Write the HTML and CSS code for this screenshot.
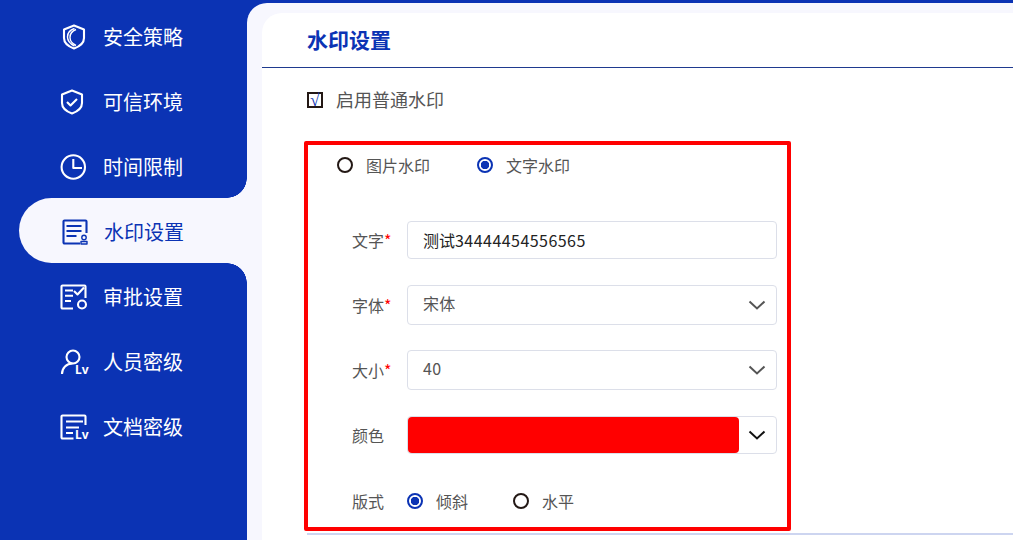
FILE: index.html
```html
<!DOCTYPE html>
<html lang="zh-CN">
<head>
  <meta charset="UTF-8" />
  <meta name="viewport" content="width=device-width, initial-scale=1.0"/>
  <link rel="stylesheet" href="styles.css">
  <title>水印设置</title>
</head>
<body>
  <div class="layout">
    <!-- 侧边菜单 -->
    <nav class="side-nav">
      <a class="nav-item">
        <svg class="nav-icon" viewBox="-1 0 26 26"><path d="M13 1.500 23 5.500v8.500c0 5-4.500 8.500-10 10.500C7.500 22.500 3 19 3 14V5.500z"/><path class="thin" d="M13.500 4.500C8.500 6 6.500 9 6.500 13c0 4 3 7 7 9"/><path class="thin" d="M15 5.500C11 7 9 10 9 13.500c0 3 2 6 6 8"/></svg>
        <span>安全策略</span>
      </a>
      <a class="nav-item">
        <svg class="nav-icon" viewBox="1 0 26 26"><path d="M13 1.500 23 5.500v8.500c0 5-4.500 8.500-10 10.500C7.500 22.500 3 19 3 14V5.500z"/><path d="m8 13 3.500 3.500 6.500-6.500"/></svg>
        <span>可信环境</span>
      </a>
      <a class="nav-item">
        <svg class="nav-icon" viewBox="0 0 26 26"><circle cx="13.300" cy="13" r="11.700"/><path d="M13.300 5V14H22"/></svg>
        <span>时间限制</span>
      </a>
      <a class="nav-item active">
        <svg class="nav-icon" viewBox="0 0 26 26"><path d="M18 24.500H2.500a1 1 0 0 1-1-1V2.500a1 1 0 0 1 1-1h21a1 1 0 0 1 1 1V14"/><path d="M4.500 7h15M4.500 12h15M4.500 17h10"/><circle class="thin" cx="22" cy="18.500" r="2.200"/><path class="thin" d="M19 25h6v-2.500h-6z"/></svg>
        <span>水印设置</span>
      </a>
      <a class="nav-item">
        <svg class="nav-icon" viewBox="0 0 26 26"><path d="M13 24.500H2.500a1 1 0 0 1-1-1V2.500a1 1 0 0 1 1-1h22a1 1 0 0 1 1 1V14"/><path d="M5 6.500h8M5 11.700h8M5 17h6"/><path d="m14 7 3.500 3.500 6.500-7"/><circle cx="22" cy="20.500" r="4"/></svg>
        <span>审批设置</span>
      </a>
      <a class="nav-item">
        <svg class="nav-icon" viewBox="0 0 26 26"><circle cx="13" cy="8" r="6.500"/><path d="M2 25c0-6 4.500-10.500 10.500-10.500"/><text class="lv" x="15" y="25">Lv</text></svg>
        <span>人员密级</span>
      </a>
      <a class="nav-item">
        <svg class="nav-icon" viewBox="0 0 26 26"><path d="M13.500 24.500H2.500a1 1 0 0 1-1-1V2.500a1 1 0 0 1 1-1h22a1 1 0 0 1 1 1V11"/><path d="M6 7.500h17M6 13.500h13M6 19h7"/><text class="lv" x="15" y="25">Lv</text></svg>
        <span>文档密级</span>
      </a>
    </nav>

    <main class="main">
      <div class="card">
        <div class="card-title">水印设置</div>
        <div class="card-body">
          <label class="check-row">
            <span class="check-box">√</span>
            <span>启用普通水印</span>
          </label>

          <div class="mark-box">
            <div class="radio-row">
              <span class="radio"></span><span class="radio-text">图片水印</span>
              <span class="radio on"></span><span class="radio-text">文字水印</span>
            </div>

            <div class="form-row row-text">
              <span class="form-label">文字<i>*</i></span>
              <div class="control"><span>测试<span class="digits">34444454556565</span></span></div>
            </div>
            <div class="form-row row-font">
              <span class="form-label">字体<i>*</i></span>
              <div class="control">
                <span class="value">宋体</span>
                <svg class="arrow" viewBox="0 0 18 10"><path d="M1.500 1.500 9 8.500l7.500-7"/></svg>
              </div>
            </div>
            <div class="form-row row-size">
              <span class="form-label">大小<i>*</i></span>
              <div class="control">
                <span class="value">40</span>
                <svg class="arrow" viewBox="0 0 18 10"><path d="M1.500 1.500 9 8.500l7.500-7"/></svg>
              </div>
            </div>
            <div class="form-row row-color">
              <span class="form-label">颜色</span>
              <div class="control color-control">
                <div class="color-fill"></div>
                <svg class="arrow dark" viewBox="0 0 18 10"><path d="M1.500 1.500 9 8.500l7.500-7"/></svg>
              </div>
            </div>
            <div class="form-row row-style">
              <span class="form-label">版式</span>
              <span class="radio on"></span><span class="radio-text">倾斜</span>
              <span class="radio"></span><span class="radio-text">水平</span>
            </div>
          </div>
          <div class="bottom-line"></div>
        </div>
      </div>
    </main>
  </div>
</body>
</html>
```

FILE: styles.css
```css
* {
  box-sizing: border-box;
}

:root {
  --blue: #0b33b4;
  --light: #f7f7fe;
  --text-color: #333333;
  --muted-color: #555555;
  --border-color: #dcdfe9;
}

html, body {
  margin: 0;
  padding: 0;
  height: 100%;
  overflow: hidden;
  background: var(--blue);
  font-family: "Noto Sans CJK SC", "Noto Sans", sans-serif;
  color: var(--text-color);
}

.layout {
  display: flex;
  height: 540px;
}

/* 侧边菜单 */
.side-nav {
  width: 247px;
  flex-shrink: 0;
  display: flex;
  flex-direction: column;
  padding-top: 3px;
}

.nav-item {
  position: relative;
  height: 65px;
  display: flex;
  align-items: center;
  gap: 17px;
  padding: 2px 0 0 60px;
  color: #ffffff;
  font-size: 20px;
}

.nav-icon {
  width: 26px;
  height: 26px;
  overflow: visible;
  fill: none;
  stroke: currentColor;
  stroke-width: 2.100;
  stroke-linejoin: round;
  flex-shrink: 0;
}

.nav-icon .thin {
  stroke-width: 1.400;
}

.nav-icon .lv {
  fill: currentColor;
  stroke: none;
  font-size: 12px;
  font-weight: 700;
  font-family: "Noto Sans", sans-serif;
}

.nav-item.active {
  margin-left: 19px;
  padding-left: 43px;
  gap: 16px;
  color: var(--blue);
  background: var(--light);
  border-radius: 33px 0 0 33px;
}

.nav-item.active::before,
.nav-item.active::after {
  content: '';
  position: absolute;
  right: 0;
  width: 20px;
  height: 20px;
}

.nav-item.active::before {
  top: -20px;
  background: radial-gradient(circle at 0 0, var(--blue) 19.500px, var(--light) 20px);
}

.nav-item.active::after {
  bottom: -20px;
  background: radial-gradient(circle at 0 100%, var(--blue) 19.500px, var(--light) 20px);
}

/* 主区域 */
.main {
  flex: 1;
  min-width: 0;
  margin-top: 3px;
  padding: 10px 0 0 15px;
  background: var(--light);
  border-top-left-radius: 20px;
}

.card {
  height: 100%;
  background: #ffffff;
  border-top-left-radius: 20px;
}

.card-title {
  height: 55px;
  padding: 8px 0 0 45px;
  font-size: 21px;
  line-height: 36px;
  font-weight: 700;
  color: var(--blue);
  border-bottom: 1px solid #1f3a8f;
}

.card-body {
  padding: 0 0 0 42px;
}

.check-row {
  display: flex;
  align-items: center;
  gap: 13px;
  height: 32px;
  margin: 15px 0 0 3px;
  font-size: 18px;
  color: var(--muted-color);
}

.check-box {
  width: 16px;
  height: 16px;
  margin-top: 2px;
  border: 2px solid #231815;
  display: flex;
  align-items: center;
  justify-content: center;
  font-family: "Liberation Serif", serif;
  font-size: 17px;
  line-height: 1;
  color: var(--blue);
}

.mark-box {
  width: 487px;
  height: 390px;
  margin-top: 26px;
  padding: 0 0 0 29px;
  border: 4px solid #ff0000;
  border-radius: 2px;
}

.radio-row {
  display: flex;
  align-items: center;
  height: 40px;
}

.radio {
  width: 16px;
  height: 16px;
  flex-shrink: 0;
  border: 2px solid #231815;
  border-radius: 50%;
}

.radio.on {
  border-color: var(--blue);
  background: radial-gradient(circle, var(--blue) 4px, #ffffff 4.500px);
}

.radio-text {
  margin: 0 47px 0 13px;
  font-size: 16px;
  color: var(--muted-color);
}

.form-row {
  display: flex;
  align-items: center;
  margin-left: 15px;
}

.row-text {
  height: 38px;
  margin-top: 36px;
}

.row-font {
  height: 40px;
  margin-top: 26px;
}

.row-size {
  height: 40px;
  margin-top: 25px;
}

.row-color {
  height: 38px;
  margin-top: 26px;
}

.row-style {
  height: 32px;
  margin-top: 31px;
}

.form-label {
  width: 55px;
  flex-shrink: 0;
  font-size: 16px;
  color: var(--muted-color);
}

.form-label i {
  font-style: normal;
  color: #ff0000;
}

.control {
  width: 370px;
  height: 100%;
  display: flex;
  align-items: center;
  justify-content: space-between;
  padding: 0 10px 0 15px;
  font-size: 16px;
  color: #222222;
  background: #ffffff;
  border: 1px solid var(--border-color);
  border-radius: 4px;
}

.digits {
  letter-spacing: 0.460px;
}

.value {
  margin-bottom: 4px;
  color: var(--muted-color);
  letter-spacing: 0.300px;
}

.arrow {
  width: 18px;
  height: 10px;
  fill: none;
  stroke: #555555;
  stroke-width: 2;
}

.arrow.dark {
  stroke: #111111;
}

.color-control {
  padding: 0 10px 0 0;
}

.color-fill {
  width: 331px;
  height: 100%;
  background: #ff0000;
  border-radius: 4px;
}

.row-style .radio-text {
  margin-right: 45px;
}

.bottom-line {
  height: 2px;
  margin: 2px 0 0 3px;
  background: #cdd5f0;
}
```
